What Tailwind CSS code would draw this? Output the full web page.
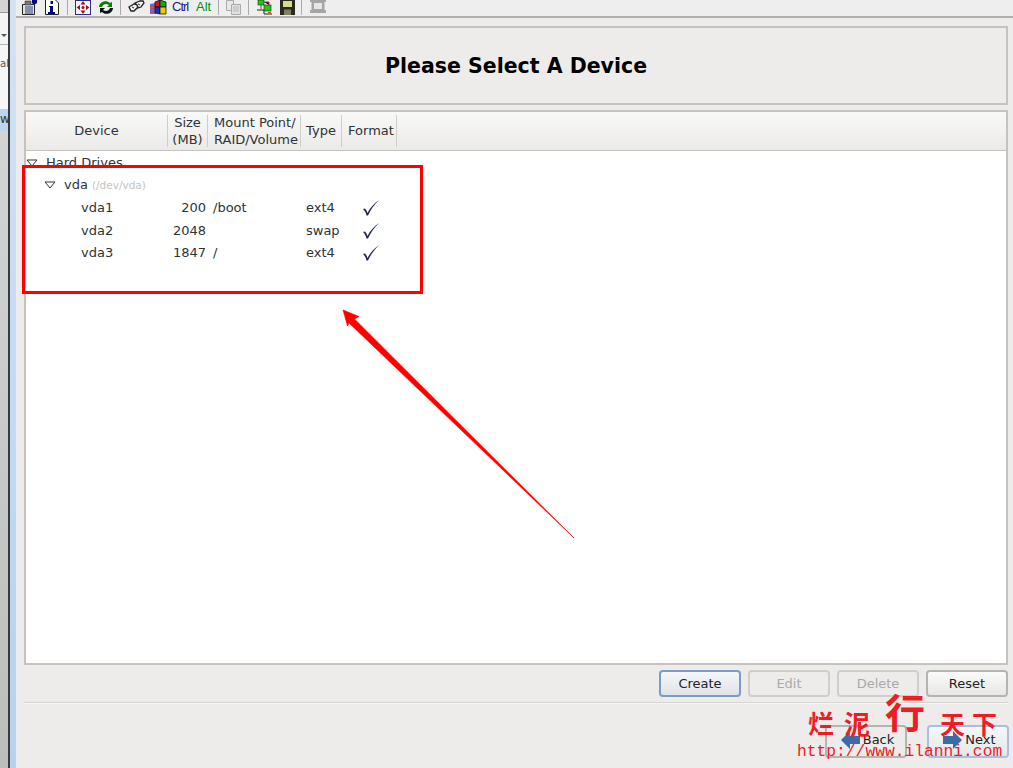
<!DOCTYPE html>
<html lang="en">
<head>
  <meta charset="UTF-8">
  <title>Please Select A Device</title>
  <script src="https://cdn.jsdelivr.net/npm/@tailwindcss/browser@4"></script>
</head>
<body class="w-[1013px] h-[768px] overflow-hidden relative bg-[#edeceb] text-[#2e3436] font-['DejaVu_Sans',sans-serif]">
<div class="flex h-[768px]">

  <!-- Window behind -->
  <div class="w-[8px] shrink-0 flex flex-col overflow-hidden bg-[#c4c4c4]">
    <div class="h-[13px] bg-[#d4d4d4] border-b border-[#9a9a9a]"></div>
    <div class="h-[32px] bg-[#f4f4f4] border-b border-[#b8b8b8] relative">
      <div class="absolute left-[1px] top-[21px] border-x-[3px] border-t-[3px] border-x-transparent border-t-[#555]"></div>
    </div>
    <div class="h-[64px] bg-[#f6f6f6] pt-[13px] text-[10px] leading-[12px] text-[#555]">al</div>
    <div class="h-[22px] bg-[#bcd5f2] text-[12px] leading-[20px] text-[#333]">w</div>
    <div class="flex-1 bg-gradient-to-b from-[#d4d4d4] to-[#bdbdbd]"></div>
  </div>
  <div class="w-[2px] shrink-0 bg-[#3a3a3a]"></div>
  <div class="w-[6px] shrink-0 bg-gradient-to-b from-[#d3e3f4] to-[#b5d2f0]"></div>

  <main class="flex-1 flex flex-col min-w-0">
    <!-- Toolbar -->
    <div class="h-[18px] shrink-0 bg-[#eeeeee] border-b-2 border-[#b0b0b0] flex items-start pl-[6px] overflow-hidden">
      <svg class="w-[16px] h-[15px]" viewBox="0 0 16 15"><path d="M.5 4.500h12v10H.5z" fill="#e8e4d0" stroke="#222"/><path d="M3 1h6v4H3z" fill="#777" stroke="#222" stroke-width=".5"/><path d="M3 7h8M3 9h8M3 11h8M3 13h8" stroke="#1a3f96"/><path d="M10 0h5v3l-3 2-2-2z" fill="#00008b"/></svg>
      <svg class="w-[16px] h-[15px] ml-[7px]" viewBox="0 0 16 15"><path d="M.5 0v14.500h13V3l-3-3" fill="#fff" stroke="#222"/><path d="M4 6h4v6h2v2H3v-2h2V7H4zM5.500 1h2.500v3H5.500z" fill="#00008b"/></svg>
      <div class="w-[1px] h-[15px] ml-[6px] bg-[#aaa]"></div>
      <svg class="w-[16px] h-[15px] ml-[7px]" viewBox="0 0 16 15"><rect x=".5" y=".5" width="15" height="14" fill="#f6f6ff" stroke="#2a2a8a"/><path d="M8 1l2.500 3.500h-5zM8 14l2.500-3.500h-5zM1.500 7.500L5 5v5zM14.500 7.500L11 5v5z" fill="#9c1414"/><circle cx="8" cy="7.500" r="1.500" fill="#9c1414"/></svg>
      <svg class="w-[16px] h-[15px] ml-[7px]" viewBox="0 0 16 15"><path d="M1 7C1 2 8-1 12 3l2-1v5H9l2-2C8 3 5 4 4 7z" fill="#0a7a0a"/><path d="M15 8c0 5-7 8-11 4l-2 1V8h5l-2 2c3 2 6 1 7-2z" fill="#111"/></svg>
      <div class="w-[1px] h-[15px] ml-[6px] bg-[#aaa]"></div>
      <svg class="w-[17px] h-[15px] ml-[7px]" viewBox="0 0 17 15"><path d="M1 7l5-3 3 1 1 2-4 4H3zM7 3l5-2h3l1 2-3 4-3 1-1-3z" fill="#f4f4f4" stroke="#222" stroke-width="1.300"/><path d="M4 7l2 1M10 4l2 1" stroke="#222"/></svg>
      <svg class="w-[17px] h-[15px] ml-[5px]" viewBox="0 0 17 15"><path d="M0 4l6-1v11H0z" fill="#6c6cd8"/><path d="M0 6h6M0 9h6M0 12h6" stroke="#e33"/><path d="M5 2l5-2v7H5z" fill="#d11" stroke="#111" stroke-width=".8"/><path d="M10 0l6 2v5h-6z" fill="#1a1" stroke="#111" stroke-width=".8"/><path d="M5 7h5v7l-5-1z" fill="#13c" stroke="#111" stroke-width=".8"/><path d="M10 7h6v7h-6z" fill="#ec0" stroke="#111" stroke-width=".8"/></svg>
      <span class="ml-[5px] w-[17px] text-[13px] leading-[14px] tracking-[-1px] text-[#1c1c8c] font-['Liberation_Sans',sans-serif]">Ctrl</span>
      <span class="ml-[7px] w-[15px] text-[13px] leading-[14px] text-[#0a8a0a] font-['Liberation_Sans',sans-serif]">Alt</span>
      <div class="w-[1px] h-[15px] ml-[7px] bg-[#aaa]"></div>
      <svg class="w-[17px] h-[15px] ml-[6px]" viewBox="0 0 17 15"><path d="M1.500 .5h7v10h-7z" fill="#e8e8e8" stroke="#aaa"/><path d="M6.500 4.500h9v10h-9z" fill="#e0e0e0" stroke="#aaa"/><path d="M8 7h6M8 9h6M8 11h6" stroke="#bbb"/></svg>
      <div class="w-[1px] h-[15px] ml-[6px] bg-[#aaa]"></div>
      <svg class="w-[16px] h-[15px] ml-[8px]" viewBox="0 0 16 15"><path d="M0 10h7v4h8" fill="none" stroke="#222"/><rect x="1" y="0" width="6" height="5" fill="#14d014" stroke="#222" stroke-width=".6"/><rect x="7" y="5" width="7" height="6" fill="#14d014" stroke="#222" stroke-width=".6"/><path d="M4 5v4M7 2h5v3" stroke="#a33"/><path d="M11 12h3v1h-3z" fill="#e33"/></svg>
      <svg class="w-[15px] h-[15px] ml-[7px]" viewBox="0 0 15 15"><rect x="0" y="0" width="15" height="15" fill="#2a2a1a"/><rect x="3" y="1" width="9" height="6" fill="#d8d890"/><rect x="4" y="9.500" width="7" height="5.500" fill="#808060"/></svg>
      <div class="w-[1px] h-[15px] ml-[6px] bg-[#aaa]"></div>
      <svg class="w-[16px] h-[13px] ml-[8px]" viewBox="0 0 16 13"><path d="M0 0h16v2h-1.500v8H16v3H0v-3h1.500V2H0z" fill="#a5a5a5"/><rect x="4" y="3" width="8" height="6" fill="#e6e6e6"/></svg>
    </div>

    <!-- Installer -->
    <div class="flex-1 flex flex-col pl-[8px] pr-[5px] pt-[8px]">
      <div class="h-[79px] shrink-0 border-2 border-[#c4c3bf] flex items-center justify-center pt-[2px]">
        <h1 class="text-[20.5px] font-bold text-black">Please Select A Device</h1>
      </div>

      <div class="mt-[5px] h-[555px] shrink-0 border-2 border-[#c4c3bf] bg-white flex flex-col relative">
        <div class="h-[39px] shrink-0 bg-gradient-to-b from-[#f9f9f8] to-[#ebeae8] border-b border-[#c4c3bf] flex text-[13px] leading-[17px]">
          <div class="w-[142px] flex items-center justify-center border-r border-[#cfcec9] my-[3px] pb-[2px]">Device</div>
          <div class="w-[40px] flex items-center justify-center text-center border-r border-[#cfcec9] my-[3px]">Size<br>(MB)</div>
          <div class="w-[93px] flex items-center justify-center border-r border-[#cfcec9] my-[3px] pl-[4px] whitespace-nowrap">Mount Point/<br>RAID/Volume</div>
          <div class="w-[41px] flex items-center justify-center border-r border-[#cfcec9] my-[3px] pb-[2px]">Type</div>
          <div class="w-[55px] flex items-center justify-center border-r border-[#cfcec9] my-[3px] pb-[2px] pl-[4px]">Format</div>
        </div>

        <div class="text-[13px] leading-[22px] pt-[1px]">
          <div class="flex items-center h-[22px]">
            <svg class="w-[12px] h-[8px]" viewBox="0 0 12 8"><path d="M1 1h10L6 7z" fill="#fff" stroke="#333"/></svg>
            <span class="ml-[8px]">Hard Drives</span>
          </div>
          <div class="flex items-center h-[23px] pl-[18px] pb-[2px]">
            <svg class="w-[12px] h-[8px]" viewBox="0 0 12 8"><path d="M1 1h10L6 7z" fill="#fff" stroke="#333"/></svg>
            <span class="ml-[8px]">vda</span>
            <span class="ml-[4px] text-[10.5px] text-[#c4c4c4]">(/dev/vda)</span>
          </div>
          <div class="flex items-center h-[22px]">
            <span class="w-[143px] pl-[55px]">vda1</span>
            <span class="w-[37px] text-right">200</span>
            <span class="w-[96px] pl-[7px]">/boot</span>
            <span class="w-[55px] pl-[4px]">ext4</span>
            <svg class="w-[17px] h-[16px] ml-[5px]" viewBox="0 0 17 16"><path d="M1 9l2-.5c1.500 1.500 2 3 2.500 4.500C8 8 12 3.500 17 0c-5 5-8.500 10-11 15.500H4.500C4 13 3 11 1 9z" fill="#1f2a4d"/></svg>
          </div>
          <div class="flex items-center h-[23px]">
            <span class="w-[143px] pl-[55px]">vda2</span>
            <span class="w-[37px] text-right">2048</span>
            <span class="w-[96px] pl-[7px]"></span>
            <span class="w-[55px] pl-[4px]">swap</span>
            <svg class="w-[17px] h-[16px] ml-[5px]" viewBox="0 0 17 16"><path d="M1 9l2-.5c1.500 1.500 2 3 2.500 4.500C8 8 12 3.500 17 0c-5 5-8.500 10-11 15.500H4.500C4 13 3 11 1 9z" fill="#1f2a4d"/></svg>
          </div>
          <div class="flex items-center h-[22px]">
            <span class="w-[143px] pl-[55px]">vda3</span>
            <span class="w-[37px] text-right">1847</span>
            <span class="w-[96px] pl-[7px]">/</span>
            <span class="w-[55px] pl-[4px]">ext4</span>
            <svg class="w-[17px] h-[16px] ml-[5px]" viewBox="0 0 17 16"><path d="M1 9l2-.5c1.500 1.500 2 3 2.500 4.500C8 8 12 3.500 17 0c-5 5-8.500 10-11 15.500H4.500C4 13 3 11 1 9z" fill="#1f2a4d"/></svg>
          </div>
        </div>
      </div>

      <!-- Action buttons -->
      <div class="mt-[5px] flex justify-end gap-[7px] text-[13px] shrink-0">
        <button class="w-[82px] h-[27px] rounded-[4px] border-2 border-[#7b9cc4] bg-gradient-to-b from-[#f6f7f9] to-[#dfe3e9] text-[#222]">Create</button>
        <button class="w-[82px] h-[27px] rounded-[4px] border-2 border-[#cfcecb] bg-[#edeceb] text-[#a9a9a7]">Edit</button>
        <button class="w-[82px] h-[27px] rounded-[4px] border-2 border-[#cfcecb] bg-[#edeceb] text-[#a9a9a7]">Delete</button>
        <button class="w-[82px] h-[27px] rounded-[4px] border-2 border-[#b5b4b0] bg-gradient-to-b from-[#fbfbfb] to-[#e8e7e5] text-[#222]">Reset</button>
      </div>

      <div class="mt-[5px] h-[2px] shrink-0 bg-[#d6d5d1] border-b border-[#f6f6f5]"></div>

      <!-- Back / Next -->
      <div class="mt-[21px] -mr-[1px] flex justify-end gap-[20px] text-[13px] shrink-0">
        <button class="w-[82px] h-[33px] rounded-[4px] border-2 border-[#b5b4b0] bg-[#edeceb] text-[#222] flex items-center justify-center gap-[3px] pl-[3px] pb-[3px]">
          <svg class="w-[19px] h-[18px]" viewBox="0 0 19 18"><path d="M0 9l9-9v5h10v8H9v5z" fill="#3c6ca8"/></svg>Back
        </button>
        <button class="w-[82px] h-[33px] rounded-[4px] border-2 border-[#a6c0de] bg-gradient-to-b from-[#f6f7f9] to-[#e4e7eb] text-[#222] flex items-center justify-center gap-[3px] pl-[3px] pb-[3px]">
          <svg class="w-[19px] h-[18px]" viewBox="0 0 19 18"><path d="M19 9l-9-9v5H0v8h10v5z" fill="#3c6ca8"/></svg>Next
        </button>
      </div>
    </div>
  </main>
</div>

<!-- Annotations over the screenshot -->
<div class="absolute left-[22px] top-[165px] w-[401px] h-[129px] border-[3px] border-[#f00]"></div>
<svg class="absolute left-0 top-0 pointer-events-none" width="1013" height="768" viewBox="0 0 1013 768">
  <path d="M343 310l16 6.500-4.500 2.500L574 538 349 323l-1.500 3z" fill="#f00" stroke="#f00" stroke-width=".6"/>
</svg>

<!-- Watermark -->
<div class="absolute left-[808px] top-[708px] text-[26px] leading-[30px] tracking-[10px] whitespace-nowrap font-bold text-[#ee1c25] font-['Noto_Sans_CJK_SC',sans-serif]">烂泥</div>
<div class="absolute left-[885px] top-[691px] text-[40px] leading-[40px] font-bold text-[#ee1c25] font-['Noto_Sans_CJK_SC',sans-serif]">行</div>
<div class="absolute left-[940px] top-[708px] text-[25px] leading-[30px] tracking-[7px] whitespace-nowrap font-bold text-[#ee1c25] font-['Noto_Sans_CJK_SC',sans-serif]">天下</div>
<div class="absolute left-[797px] top-[742px] text-[16.300px] leading-[20px] text-[#ee1c25] font-['Liberation_Mono',monospace]">http://www.ilanni.com</div>
</body>
</html>
